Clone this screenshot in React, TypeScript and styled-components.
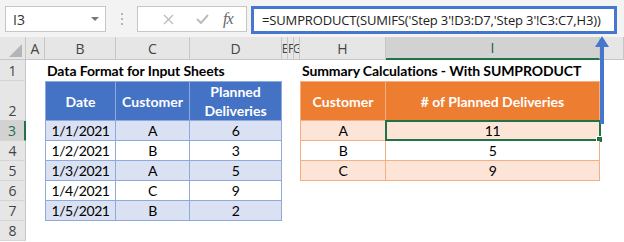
import React from 'react';
import styled, { createGlobalStyle } from 'styled-components';

const GlobalStyle = createGlobalStyle`
  html, body { margin: 0; padding: 0; background: #fff; }
  body { width: 624px; height: 242px; overflow: hidden; }
`;

type Tone = 'blue' | 'orange';
type Kind = 'head' | 'band' | 'plain';

const palette: Record<Tone, { head: string; band: string; line: string }> = {
  blue: { head: '#4472c4', band: '#d9e1f2', line: '#8ea9db' },
  orange: { head: '#ed7d31', band: '#fce4d6', line: '#f4b084' },
};

const GREEN = '#217346';
const ACCENT = '#4677cc';

const Window = styled.div`
  position: relative;
  width: 624px;
  height: 242px;
  overflow: hidden;
  background: #fff;
`;

const TopBar = styled.div`
  height: 37px;
  box-sizing: border-box;
  padding: 6px 0 0 5px;
  background: #f3f3f3;
  display: flex;
  align-items: flex-start;
`;

const NameBox = styled.div`
  width: 101px;
  height: 26px;
  box-sizing: border-box;
  background: #fff;
  border: 1px solid #c6c6c6;
  display: flex;
  align-items: center;
  justify-content: space-between;
  padding: 0 6px 0 7px;
  font: 14px 'Open Sans', sans-serif;
  color: #333;
`;

const DropArrow = styled.span`
  width: 0;
  height: 0;
  border-left: 4px solid transparent;
  border-right: 4px solid transparent;
  border-top: 4px solid #777;
`;

const Grip = styled.div`
  width: 2px;
  height: 26px;
  margin: 0 14px 0 15px;
  display: flex;
  flex-direction: column;
  justify-content: center;
  gap: 3px;

  span {
    width: 2px;
    height: 2px;
    background: #b4b4b4;
  }
`;

const ButtonBox = styled.div`
  width: 110px;
  height: 26px;
  box-sizing: border-box;
  background: #fff;
  border: 1px solid #c6c6c6;
  display: flex;
  align-items: center;
  padding-left: 13px;
`;

const IconSlot = styled.div`
  width: 34px;
  display: flex;
  align-items: center;
  justify-content: center;
`;

const Fx = styled.span`
  margin-left: 4px;
  font: italic 16px 'Liberation Serif', serif;
  color: #666;
  letter-spacing: -1px;
`;

const FormulaInput = styled.div`
  margin-left: 4px;
  width: 366px;
  height: 28px;
  box-sizing: border-box;
  background: #fff;
  border: 3px solid ${ACCENT};
  display: flex;
  align-items: center;
  padding-left: 8px;
  font: 13px 'Open Sans', sans-serif;
  letter-spacing: -0.15px;
  color: #222;
  white-space: nowrap;
  overflow: hidden;
`;

const Sheet = styled.div`
  display: grid;
  grid-template-columns: 26px 19px 71px 74px 92px 6px 6px 6px 86px 214px 24px;
  grid-template-rows: 23px 21px 40px repeat(6, 20px);
`;

const Corner = styled.div`
  background: #e6e6e6;
  border-right: 1px solid #c6c6c6;
  border-bottom: 1px solid #c6c6c6;
  box-sizing: border-box;
  display: flex;
  align-items: flex-end;
  justify-content: flex-end;
  padding: 0 3px 2px 0;
`;

const ColHead = styled.div<{ $selected?: boolean; $narrow?: boolean }>`
  background: ${p => (p.$selected ? '#d2d2d2' : '#e6e6e6')};
  border-right: 1px solid #c6c6c6;
  border-bottom: ${p => (p.$selected ? `2px solid ${GREEN}` : '1px solid #c6c6c6')};
  box-sizing: border-box;
  display: flex;
  align-items: center;
  justify-content: center;
  overflow: hidden;
  font: ${p => (p.$narrow ? '12px' : '14px')} 'Open Sans', sans-serif;
  letter-spacing: ${p => (p.$narrow ? '-1px' : '0')};
  color: ${p => (p.$selected ? '#1e5e3a' : '#444')};
`;

const RowHead = styled.div<{ $selected?: boolean; $bottom?: boolean }>`
  background: ${p => (p.$selected ? '#d2d2d2' : '#e6e6e6')};
  border-right: ${p => (p.$selected ? `2px solid ${GREEN}` : '1px solid #c6c6c6')};
  border-bottom: 1px solid #d4d4d4;
  box-sizing: border-box;
  display: flex;
  justify-content: center;
  align-items: ${p => (p.$bottom ? 'flex-end' : 'center')};
  font: 14px 'Open Sans', sans-serif;
  line-height: 19px;
  color: ${p => (p.$selected ? GREEN : '#444')};
`;

const Blank = styled.div`
  background: #fff;
`;

const Title = styled.div<{ $span: number }>`
  grid-column: span ${p => p.$span};
  display: flex;
  align-items: center;
  padding-left: 2px;
  white-space: nowrap;
  font: bold 14px Lato, sans-serif;
  letter-spacing: -0.1px;
  color: #000;
`;

const DataCell = styled.div<{ $tone: Tone; $kind: Kind; $first?: boolean }>`
  position: relative;
  box-sizing: border-box;
  display: flex;
  align-items: center;
  justify-content: center;
  text-align: center;
  font: ${p => (p.$kind === 'head' ? 'bold' : 'normal')} 14px Lato, sans-serif;
  letter-spacing: ${p => (p.$kind === 'head' ? '0' : '-0.4px')};
  line-height: 19px;
  color: ${p => (p.$kind === 'head' ? '#fff' : '#000')};
  background: ${p =>
    p.$kind === 'head' ? palette[p.$tone].head : p.$kind === 'band' ? palette[p.$tone].band : '#fff'};
  border-right: 1px solid ${p => palette[p.$tone].line};
  border-bottom: 1px solid ${p => palette[p.$tone].line};
  border-left: ${p => (p.$first ? `1px solid ${palette[p.$tone].line}` : 'none')};
  border-top: ${p => (p.$kind === 'head' ? `1px solid ${palette[p.$tone].line}` : 'none')};
`;

const Selection = styled.div`
  position: absolute;
  inset: -1px -2px -1px -1px;
  border: 2px solid ${GREEN};
  pointer-events: none;
`;

const Handle = styled.div`
  position: absolute;
  right: -4px;
  bottom: -4px;
  width: 5px;
  height: 5px;
  background: ${GREEN};
  border: 1px solid #fff;
`;

const Arrow = styled.svg`
  position: absolute;
  left: 595px;
  top: 36px;
`;

const columns = ['A', 'B', 'C', 'D', 'E', 'F', 'G', 'H', 'I', ''];
const narrowCols = ['E', 'F', 'G'];

const inputRows = [
  ['1/1/2021', 'A', '6'],
  ['1/2/2021', 'B', '3'],
  ['1/3/2021', 'A', '5'],
  ['1/4/2021', 'C', '9'],
  ['1/5/2021', 'B', '2'],
];

const summaryRows = [
  ['A', '11'],
  ['B', '5'],
  ['C', '9'],
];

const Gap = ({ n }: { n: number }) => (
  <>
    {Array.from({ length: n }, (_, i) => (
      <Blank key={i} />
    ))}
  </>
);

export default function App() {
  return (
    <Window>
      <GlobalStyle />
      <TopBar>
        <NameBox>
          <span>I3</span>
          <DropArrow />
        </NameBox>
        <Grip>
          <span />
          <span />
          <span />
        </Grip>
        <ButtonBox>
          <IconSlot>
            <svg width="11" height="11" viewBox="0 0 11 11">
              <path d="M1 1 L10 10 M10 1 L1 10" stroke="#bdbdbd" strokeWidth="1.4" />
            </svg>
          </IconSlot>
          <IconSlot>
            <svg width="13" height="10" viewBox="0 0 13 10">
              <path d="M1 5 L5 9 L12 1" stroke="#bdbdbd" strokeWidth="2" fill="none" />
            </svg>
          </IconSlot>
          <Fx>fx</Fx>
        </ButtonBox>
        <FormulaInput>=SUMPRODUCT(SUMIFS('Step 3'!D3:D7,'Step 3'!C3:C7,H3))</FormulaInput>
      </TopBar>

      <Sheet>
        <Corner>
          <svg width="13" height="13" viewBox="0 0 13 13">
            <polygon points="13,0 13,13 0,13" fill="#b5b5b5" />
          </svg>
        </Corner>
        {columns.map((c, i) => (
          <ColHead key={i} $selected={c === 'I'} $narrow={narrowCols.includes(c)}>
            {c}
          </ColHead>
        ))}

        <RowHead>1</RowHead>
        <Blank />
        <Title $span={3}>Data Format for Input Sheets</Title>
        <Gap n={3} />
        <Title $span={2}>Summary Calculations - With SUMPRODUCT</Title>
        <Blank />

        <RowHead $bottom>2</RowHead>
        <Blank />
        <DataCell $tone="blue" $kind="head" $first>
          Date
        </DataCell>
        <DataCell $tone="blue" $kind="head">
          Customer
        </DataCell>
        <DataCell $tone="blue" $kind="head">
          Planned
          <br />
          Deliveries
        </DataCell>
        <Gap n={3} />
        <DataCell $tone="orange" $kind="head" $first>
          Customer
        </DataCell>
        <DataCell $tone="orange" $kind="head">
          # of Planned Deliveries
        </DataCell>
        <Blank />

        {inputRows.map((row, r) => {
          const kind: Kind = r % 2 === 0 ? 'band' : 'plain';
          const summary = summaryRows[r];
          return (
            <React.Fragment key={r}>
              <RowHead $selected={r === 0}>{r + 3}</RowHead>
              <Blank />
              {row.map((v, c) => (
                <DataCell key={c} $tone="blue" $kind={kind} $first={c === 0}>
                  {v}
                </DataCell>
              ))}
              <Gap n={3} />
              {summary ? (
                <>
                  <DataCell $tone="orange" $kind={kind} $first>
                    {summary[0]}
                  </DataCell>
                  <DataCell $tone="orange" $kind={kind}>
                    {summary[1]}
                    {r === 0 && (
                      <Selection>
                        <Handle />
                      </Selection>
                    )}
                  </DataCell>
                </>
              ) : (
                <Gap n={2} />
              )}
              <Blank />
            </React.Fragment>
          );
        })}

        <RowHead>8</RowHead>
        <Gap n={10} />
      </Sheet>

      <Arrow width="14" height="88" viewBox="0 0 14 88">
        <rect x="5" y="10" width="4" height="78" fill={ACCENT} />
        <polygon points="0,11 7,0 14,11" fill={ACCENT} />
      </Arrow>
    </Window>
  );
}
